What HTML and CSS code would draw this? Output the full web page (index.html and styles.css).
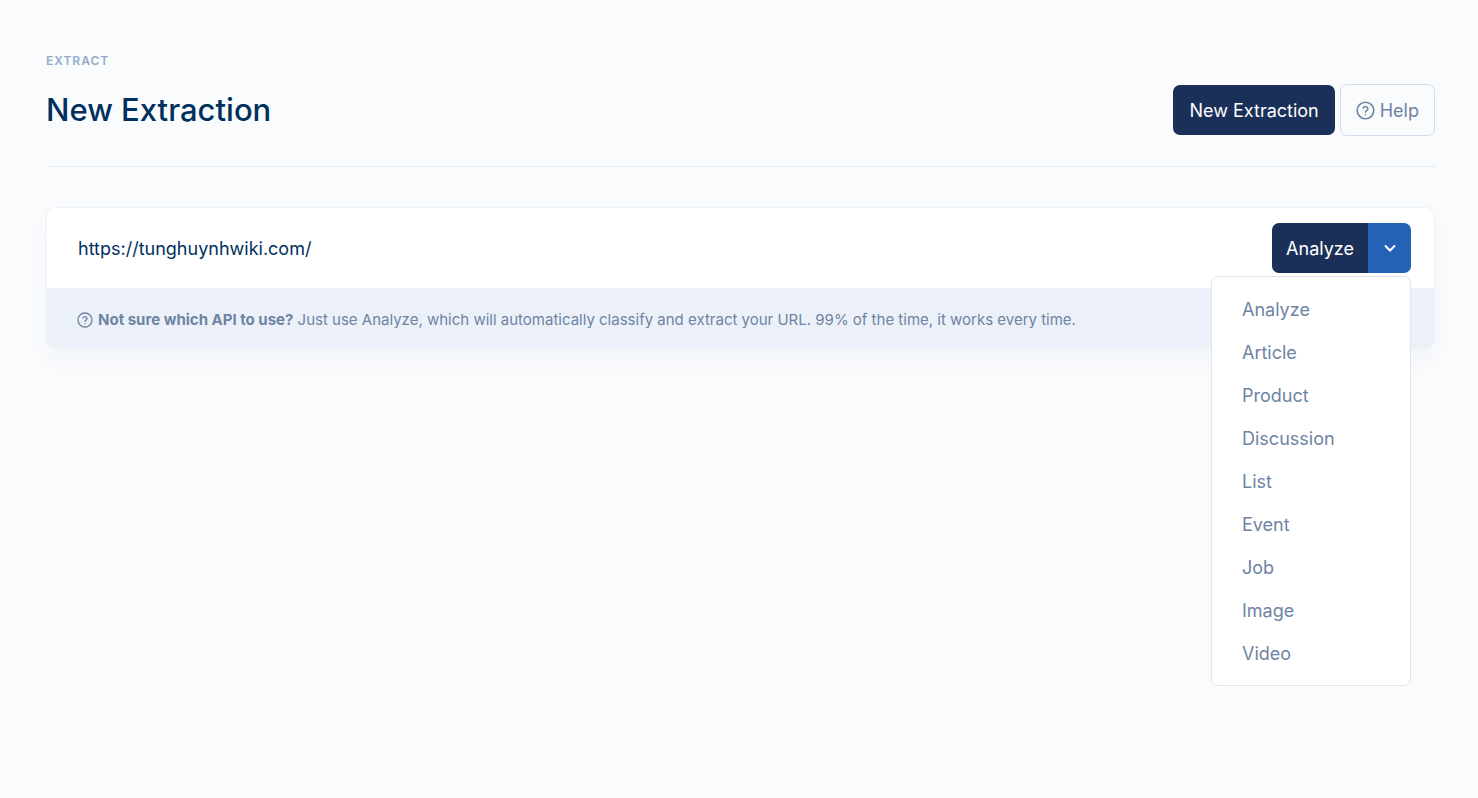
FILE: index.html
```html
<!DOCTYPE html>
<html lang="en">
<head>
<meta charset="utf-8">
<meta name="viewport" content="width=device-width, initial-scale=1">
<title>New Extraction</title>
<link rel="stylesheet" href="styles.css">
</head>
<body>
<svg class="sprite" aria-hidden="true">
  <symbol id="help-circle" viewBox="0 0 24 24">
    <circle cx="12" cy="12" r="10.5"/>
    <path d="M9 9a3.1 3.1 0 0 1 6 1c0 2-3 2.400-3 4"/>
    <path d="M12 17.400h.01"/>
  </symbol>
</svg>
<main class="page">
  <header class="header">
    <div class="heading">
      <p class="pretitle">EXTRACT</p>
      <h1 class="title">New Extraction</h1>
    </div>
    <div class="actions">
      <button class="btn btn-primary" type="button">New Extraction</button>
      <button class="btn btn-outline" type="button"><svg class="icon" aria-hidden="true"><use href="#help-circle"/></svg>Help</button>
    </div>
  </header>
  <section class="card">
    <form class="url-row">
      <input class="url-input" type="text" aria-label="URL to extract" value="https://tunghuynhwiki.com/">
      <div class="split">
        <button class="btn btn-primary split-main" type="button">Analyze</button>
        <button class="btn split-toggle" type="button" aria-label="Choose API" aria-expanded="true"><svg class="chevron" viewBox="0 0 12 8" aria-hidden="true"><path d="M1 1.500 6 6.500l5-5"/></svg></button>
        <div class="menu">
          <button class="menu-item" type="button">Analyze</button>
          <button class="menu-item" type="button">Article</button>
          <button class="menu-item" type="button">Product</button>
          <button class="menu-item" type="button">Discussion</button>
          <button class="menu-item" type="button">List</button>
          <button class="menu-item" type="button">Event</button>
          <button class="menu-item" type="button">Job</button>
          <button class="menu-item" type="button">Image</button>
          <button class="menu-item" type="button">Video</button>
        </div>
      </div>
    </form>
    <div class="card-footer">
      <svg class="icon icon-small" aria-hidden="true"><use href="#help-circle"/></svg>
      <p class="hint"><strong>Not sure which API to use?</strong> Just use Analyze, which will automatically classify and extract your URL. 99% of the time, it works every time.</p>
    </div>
  </section>
</main>
</body>
</html>
```
FILE: styles.css
```css
* {
  box-sizing: border-box;
}

body {
  margin: 0;
  background: #f9fbfd;
  color: #6e84a3;
  font-family: "Inter", "Liberation Sans", sans-serif;
  font-size: 18px;
}

button,
input {
  font: inherit;
}

button {
  cursor: pointer;
}

.sprite {
  position: absolute;
  width: 0;
  height: 0;
}

.page {
  min-height: 100vh;
  padding: 53px 43px 40px 46px;
}

.header {
  display: flex;
  align-items: flex-end;
  justify-content: space-between;
  padding-bottom: 30px;
  border-bottom: 1px solid #e3ebf6;
}

.pretitle {
  margin: 0;
  color: #95aac9;
  font-size: 12px;
  font-weight: 600;
  letter-spacing: 1px;
  line-height: 16px;
}

.title {
  margin: 21px 0 6px;
  color: #00305d;
  font-size: 31px;
  font-weight: 500;
  line-height: 40px;
}

.actions {
  display: flex;
  align-items: center;
  gap: 5px;
}

.btn {
  display: flex;
  align-items: center;
  justify-content: center;
  height: 50px;
  padding: 0 16px;
  border: 0;
  border-radius: 7px;
}

.btn-primary {
  background: #1a3058;
  color: #fff;
}

.btn-outline {
  gap: 5px;
  height: 52px;
  border: 1px solid #d2ddec;
  padding: 0 15px;
  background: #f9fbfd;
  color: #6e84a3;
}

.icon {
  width: 19px;
  height: 19px;
  flex: none;
  fill: none;
  stroke: currentColor;
  stroke-width: 2;
  stroke-linecap: round;
  stroke-linejoin: round;
}

.icon-small {
  width: 16px;
  height: 16px;
}

.card {
  margin-top: 40px;
  border: 1px solid #edf2f9;
  border-radius: 9px;
  background: #fff;
  box-shadow: 0 12px 24px rgba(18, 60, 90, 0.03);
}

.url-row {
  display: flex;
  align-items: center;
  padding: 15px 23px 15px 31px;
}

.url-input {
  flex: 1;
  min-width: 0;
  height: 50px;
  padding: 0;
  border: 0;
  outline: 0;
  background: transparent;
  color: #00305d;
}

.split {
  position: relative;
  display: flex;
}

.split-main {
  padding: 0 14px;
  border-radius: 7px 0 0 7px;
}

.split-toggle {
  width: 43px;
  padding: 0;
  border-radius: 0 7px 7px 0;
  background: #2362b7;
}

.chevron {
  width: 12px;
  height: 8px;
  fill: none;
  stroke: #fff;
  stroke-width: 2;
}

.menu {
  position: absolute;
  top: 53px;
  right: 0;
  display: flex;
  flex-direction: column;
  width: 200px;
  padding: 11px 0 10px;
  border: 1px solid #e1e5ea;
  border-radius: 7px;
  background: #fff;
}

.menu-item {
  height: 43px;
  padding: 0 30px;
  border: 0;
  background: transparent;
  color: #6e84a3;
  text-align: left;
}

.card-footer {
  display: flex;
  align-items: center;
  gap: 5px;
  padding: 20px 30px 16px;
  border-radius: 0 0 8px 8px;
  background: #ecf1f9;
}

.hint {
  margin: 0;
  font-size: 15px;
  line-height: 24px;
}

.hint strong {
  font-weight: 700;
}
```
